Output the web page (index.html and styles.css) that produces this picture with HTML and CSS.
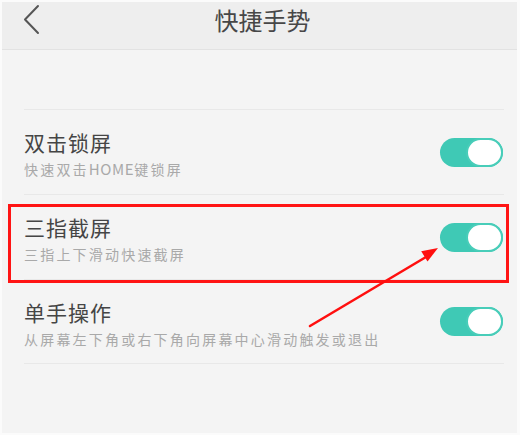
FILE: index.html
```html
<!DOCTYPE html>
<html lang="zh-CN">
<head>
<meta charset="utf-8">
<title>快捷手势</title>
<link rel="stylesheet" href="styles.css">
</head>
<body>
<div class="frame">
  <div class="screen">
    <header class="header">
      <div class="back">
        <svg width="20" height="32" viewBox="0 0 20 32"><path d="M16 2 L3 15.5 L16 29" fill="none" stroke="#555" stroke-width="2" stroke-linecap="round" stroke-linejoin="round"/></svg>
      </div>
      <h1 class="title">快捷手势</h1>
      <div></div>
    </header>
    <ul class="list">
      <li class="row">
        <div class="text">
          <div class="name">双击锁屏</div>
          <div class="desc">快速双击<span class="latin">HOME</span>键锁屏</div>
        </div>
        <span class="toggle"><span class="knob"></span></span>
      </li>
      <li class="row">
        <div class="text">
          <div class="name">三指截屏</div>
          <div class="desc">三指上下滑动快速截屏</div>
        </div>
        <span class="toggle"><span class="knob"></span></span>
      </li>
      <li class="row">
        <div class="text">
          <div class="name">单手操作</div>
          <div class="desc">从屏幕左下角或右下角向屏幕中心滑动触发或退出</div>
        </div>
        <span class="toggle"><span class="knob"></span></span>
      </li>
    </ul>
    <div class="highlight"></div>
    <svg class="arrow" width="515" height="431" viewBox="0 0 515 431">
      <line x1="308" y1="324" x2="424" y2="255" stroke="#ff0f0f" stroke-width="2.6" stroke-linecap="round"/>
      <polygon points="436,246 425.5,259.4 419.2,249.2" fill="#ff0f0f"/>
    </svg>
  </div>
</div>
</body>
</html>
```

FILE: styles.css
```css
* { box-sizing: border-box; }
html, body { margin: 0; padding: 0; }
body {
  background: #fbfbfb;
  font-family: "Noto Sans CJK SC", "Noto Sans", sans-serif;
  width: 520px;
  height: 435px;
  overflow: hidden;
}
.frame {
  padding: 2px 3px 2px 2px;
}
.screen {
  position: relative;
  width: 515px;
  height: 431px;
  background: #f4f4f4;
  overflow: hidden;
}
.header {
  display: grid;
  grid-template-columns: 1fr auto 1fr;
  align-items: start;
  height: 48px;
  padding-top: 2px;
  background: #eeeeee;
  border-bottom: 1px solid #e2e2e2;
}
.back {
  padding-left: 20px;
  height: 32px;
}
.back svg { display: block; }
.title {
  margin: 0;
  padding-left: 6px;
  font-size: 24px;
  font-weight: 400;
  line-height: 32px;
  color: #474747;
}
.list {
  list-style: none;
  margin: 59px 13px 0 22px;
  padding: 0;
}
.row {
  display: flex;
  align-items: center;
  justify-content: space-between;
  height: 85px;
  padding-top: 3px;
  border-top: 1px solid #e8e8e8;
}
.row:last-child { border-bottom: 1px solid #e8e8e8; }
.text {
  display: flex;
  flex-direction: column;
  gap: 5px;
}
.name {
  font-size: 21px;
  line-height: 26px;
  letter-spacing: 1px;
  color: #454545;
}
.desc {
  font-size: 14px;
  line-height: 18px;
  letter-spacing: 2.2px;
  color: #a9a9a9;
}
.latin {
  font-size: 15px;
  letter-spacing: 0.6px;
}
.toggle {
  display: flex;
  justify-content: flex-end;
  align-items: center;
  width: 63px;
  height: 29px;
  margin-top: -3px;
  margin-right: 1px;
  border-radius: 15px;
  background: #3fc9b5;
}
.knob {
  width: 37px;
  height: 29px;
  border-radius: 15px;
  background: #ffffff;
  border: 2px solid #48cdb9;
}
.highlight {
  position: absolute;
  left: 6px;
  top: 202px;
  width: 501px;
  height: 79px;
  border: 3px solid #ff1414;
}
.arrow {
  position: absolute;
  left: 0;
  top: 0;
  pointer-events: none;
}
```
